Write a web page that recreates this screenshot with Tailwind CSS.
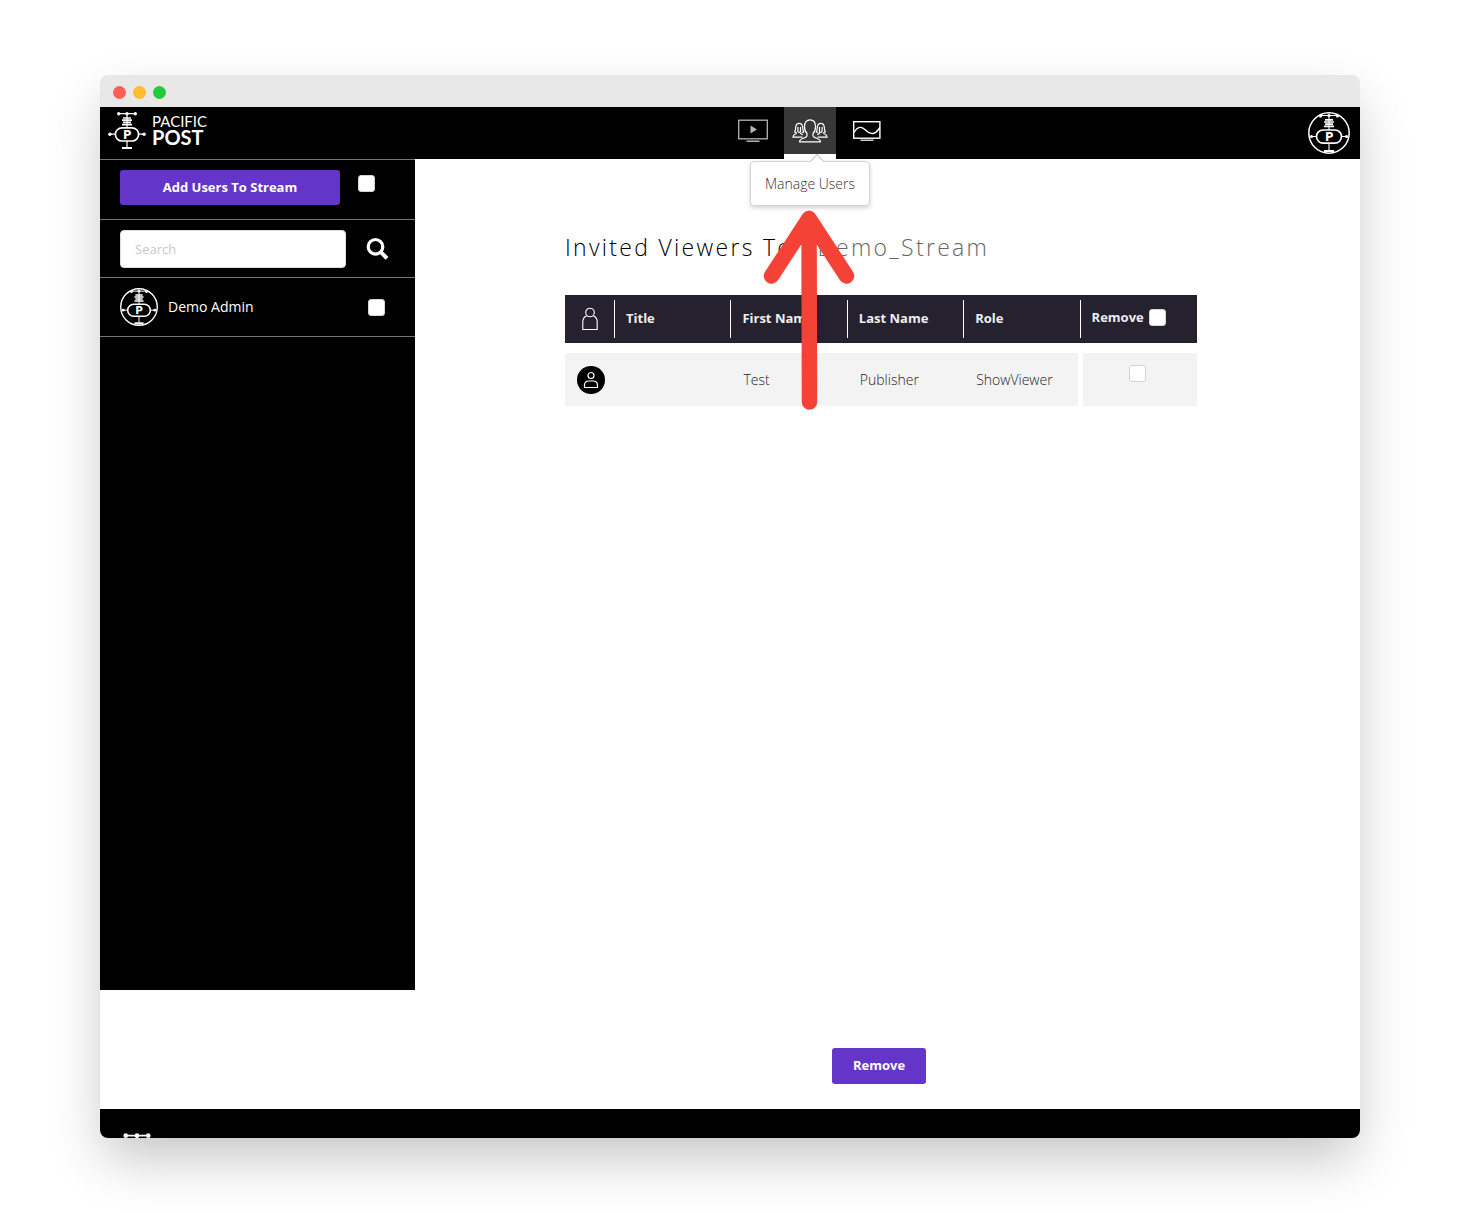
<!DOCTYPE html>
<html lang="en">
<head>
    <meta charset="UTF-8">
    <meta name="viewport" content="width=device-width, initial-scale=1.0">
    <title>Pacific Post - Manage Users</title>
    <script src="https://cdn.jsdelivr.net/npm/@tailwindcss/browser@4"></script>
</head>
<body class="bg-white font-['Open_Sans',sans-serif] text-sm overflow-hidden">

    <!-- shared shapes -->
    <svg class="hidden">
        <symbol id="emblem" viewBox="0 0 38 39">
            <g fill="none" stroke="#fff">
                <path d="M10.5 2.7h17M19 2.7v14.5M1.5 23.2h6M30.5 23.2h6M19 29.8v7" stroke-width="1.2"/>
                <path d="M15 7h8M14 9.200h10M15 11.400h8M14 13.600h10" stroke-width="1.700"/>
                <rect x="7.4" y="16.800" width="23.200" height="13.200" rx="6.6" stroke-width="1.700"/>
                <path d="M14 37h10" stroke-width="2.2"/>
            </g>
            <g fill="#fff">
                <circle cx="10.7" cy="2.7" r="1.7"/><circle cx="19" cy="2.7" r="1.7"/><circle cx="27.3" cy="2.7" r="1.7"/>
                <circle cx="1.9" cy="23.2" r="1.7"/><circle cx="36.1" cy="23.2" r="1.7"/>
                <text x="19.2" y="27.500" text-anchor="middle" font-family="DejaVu Sans" font-weight="bold" font-size="11.500">P</text>
            </g>
        </symbol>
        <symbol id="badge" viewBox="0 0 42 42">
            <circle cx="21" cy="21" r="20.2" fill="#000" stroke="#fff" stroke-width="1.5"/>
            <g fill="none" stroke="#fff">
                <path d="M12 3.5h18M21 2v16M2 24.5h7M33 24.5h7M21 31v9" stroke-width="1.1"/>
                <path d="M17 7.800h8M16 10h10M17 12.200h8M16 14.400h10" stroke-width="1.700"/>
                <rect x="8.5" y="18" width="25" height="13.200" rx="6.6" stroke-width="1.700"/>
                <path d="M16 39h10" stroke-width="2.2"/>
            </g>
            <g fill="#fff">
                <circle cx="12.6" cy="4" r="1.6"/><circle cx="21" cy="3.5" r="1.6"/><circle cx="29.4" cy="4" r="1.6"/>
                <circle cx="3.5" cy="24.5" r="1.6"/><circle cx="38.5" cy="24.5" r="1.6"/>
                <text x="21.2" y="28.800" text-anchor="middle" font-family="DejaVu Sans" font-weight="bold" font-size="11.500">P</text>
            </g>
        </symbol>
    </svg>

    <div class="h-screen px-[100px] py-[75px]">
        <div class="h-full flex flex-col rounded-lg overflow-hidden bg-white shadow-[0_24px_54px_-4px_rgba(0,0,0,0.23)]">

            <div class="h-8 shrink-0 bg-[#e8e8e8] flex items-center gap-[7px] px-[13px] pt-0.5">
                <span class="size-[13px] rounded-full bg-[#ff5f56]"></span>
                <span class="size-[13px] rounded-full bg-[#ffbd2e]"></span>
                <span class="size-[13px] rounded-full bg-[#27c93f]"></span>
            </div>

            <header class="h-[52px] shrink-0 bg-black flex relative z-10">
                <a href="#" class="w-[212px] flex pl-2 pt-1 gap-1.5 text-white font-['Lato',sans-serif]">
                    <svg class="w-[38px] h-[39px]"><use href="#emblem"/></svg>
                    <span class="flex flex-col pt-0.5">
                        <span class="text-[15px] leading-4 font-normal">PACIFIC</span>
                        <span class="text-[20px] leading-4 font-bold">POST</span>
                    </span>
                </a>
                <nav class="flex-1 flex justify-center gap-[5px]">
                    <a href="#" aria-label="Streams" class="w-[52px] h-[47px] flex items-center justify-center">
                        <svg class="w-[30px] h-6" viewBox="0 0 30 24" fill="none" stroke="#b4b4b4">
                            <rect x=".7" y="1.2" width="28.6" height="18.6" stroke-width="1.3"/>
                            <path d="M8.5 22.3h13" stroke-width="1.4"/>
                            <path d="M12.5 6.5v8l6.5-4z" fill="#b4b4b4" stroke="none"/>
                        </svg>
                    </a>
                    <div class="relative w-[52px]">
                        <a href="#" aria-label="Manage Users" class="h-[52px] flex items-center justify-center bg-[#383838] border-b-5 border-white">
                            <svg class="w-9 h-6" viewBox="0 0 36 24" fill="none" stroke="#fff" stroke-width="1.2" stroke-linejoin="round" stroke-linecap="round">
                                <path d="M15 14.500c-1.700-1.500-2.500-3.800-2.500-7C12.500 3.400 14.700.8 18 .8s5.500 2.600 5.500 6.700c0 3.200-.8 5.500-2.500 7v2.300c0 1.200 1 1.500 3 2.200 3 1 4.500 1.800 4.500 3.800H7.500c0-2 1.500-2.800 4.500-3.800 2-.7 3-1 3-2.200z"/>
                                <path d="M10 18.200H.9c.1-2 1.100-2.700 2.600-3.200.9-.3 1-.8.6-1.500L2.600 13c1.200-1.500.9-3.300 1.100-5C4 5.600 5.200 4.300 7.200 4.300S10.400 5.600 10.700 8c.2 1.700-.1 3.500 1.100 5l-1.500.5M5.900 8.300v4c0 1.500 2.600 1.500 2.600 0v-4M8.500 14c.2.700.8 1 1.800 1.500"/>
                                <path d="M26 18.200h9.100c-.1-2-1.100-2.700-2.600-3.200-.9-.3-1-.8-.6-1.500l1.500-.5c-1.200-1.500-.9-3.300-1.100-5-.3-2.400-1.500-3.700-3.500-3.700S25.600 5.600 25.300 8c-.2 1.700.1 3.500-1.100 5l1.500.5M30.100 8.300v4c0 1.500-2.600 1.500-2.600 0v-4M27.500 14c-.2.700-.8 1-1.800 1.500"/>
                            </svg>
                        </a>
                        <div role="tooltip" class="absolute -left-[34px] top-[54px] w-[120px] h-[45px] flex items-center justify-center bg-white border border-[#d4d4d5] rounded font-light text-[#333] shadow-[0_2px_4px_rgba(34,36,38,0.2)]">
                            Manage Users
                            <span class="absolute left-[61px] -top-[6px] size-2.5 rotate-45 bg-white border-t border-l border-[#c4c4c5]"></span>
                        </div>
                        <!-- pointer to the active tab -->
                        <svg class="absolute -left-[22px] top-[101px] w-[94px] h-[203px]" viewBox="0 0 94 203" fill="none" stroke="#f44336" stroke-width="15.5" stroke-linecap="round" stroke-linejoin="round">
                            <path d="M47 10.500L47.500 194M9.500 68L47 10.500 84.500 68"/>
                        </svg>
                    </div>
                    <a href="#" aria-label="Analytics" class="w-[52px] h-[47px] flex items-center justify-center">
                        <svg class="w-7 h-5" viewBox="0 0 28 20" fill="none" stroke="#fff">
                            <rect x=".7" y=".7" width="26.200" height="16.500" stroke-width="1.4"/>
                            <path d="M1 11.500C5 5 8.500 5 13 9.500s9 4.500 14-3" stroke-width="1.4"/>
                            <path d="M7.500 19.200h13" stroke="#ccc" stroke-width="1.6"/>
                        </svg>
                    </a>
                </nav>
                <a href="#" aria-label="Account" class="w-[52px] pt-[5px]">
                    <svg class="size-[42px]"><use href="#badge"/></svg>
                </a>
            </header>

            <div class="flex-1 min-h-0 flex">
                <aside class="w-[315px] shrink-0 mb-[119px] bg-black border-t border-[#777] text-white">
                    <div class="h-[60px] flex items-start pt-2.5 pl-5 pr-10 justify-between border-b border-[#777]">
                        <button type="button" class="w-[220px] h-[35px] pb-px rounded-[3px] bg-[#6435c9] text-[13px] font-bold">Add Users To Stream</button>
                        <input type="checkbox" aria-label="Select all users" class="appearance-none size-[17px] mt-[5px] rounded-[3px] bg-white border border-[#d4d4d5]">
                    </div>
                    <div class="h-[58px] flex items-center pl-5 pr-[26px] justify-between border-b border-[#777]">
                        <input type="text" placeholder="Search" aria-label="Search" class="w-[226px] h-[38px] px-3.5 rounded bg-white border border-[#dedede] text-[13px] text-black placeholder:text-[#c7c7c7] outline-none">
                        <button type="button" aria-label="Search users">
                            <svg class="size-[23px]" viewBox="0 0 23 23" fill="none" stroke="#fff">
                                <circle cx="9.500" cy="9.800" r="7.300" stroke-width="3.200"/>
                                <path d="M15 15.300l6 6" stroke-width="4"/>
                            </svg>
                        </button>
                    </div>
                    <div class="h-[59px] flex items-center pl-5 pr-[30px] border-b border-[#777]">
                        <svg class="size-[38px]"><use href="#badge"/></svg>
                        <label for="demoAdmin" class="flex-1 pl-2.5">Demo Admin</label>
                        <input type="checkbox" id="demoAdmin" class="appearance-none size-[17px] rounded-[3px] bg-white border border-[#d4d4d5]">
                    </div>
                </aside>

                <main class="flex-1 flex flex-col pl-[150px] pr-8 pt-[72px] pb-[25px]">
                    <h1 class="text-[23px] leading-8 font-light tracking-widest text-black">Invited Viewers To : <span class="text-[#666]">Demo_Stream</span></h1>

                    <table class="mt-8 w-full max-w-[632px] table-fixed border-separate border-spacing-0 text-left">
                        <thead class="text-[13px] text-[#eee]">
                            <tr class="h-12 bg-[#25212f]">
                                <th class="w-[50px] p-0">
                                    <div class="h-[38px] border-r border-white flex items-center justify-center">
                                        <svg class="w-4 h-6" viewBox="0 0 16 24" fill="none" stroke="#fff" stroke-width="1.1">
                                            <circle cx="8" cy="5.500" r="4.300"/>
                                            <path d="M4.700 8.800C2.200 9.800.8 12 .8 15v7.500h14.400V15c0-3-1.400-5.200-3.900-6.200"/>
                                        </svg>
                                    </div>
                                </th>
                                <th class="p-0"><div class="h-[38px] border-r border-white flex items-center pl-[11px] pb-0.5">Title</div></th>
                                <th class="p-0"><div class="h-[38px] border-r border-white flex items-center pl-[11px] pb-0.5">First Name</div></th>
                                <th class="p-0"><div class="h-[38px] border-r border-white flex items-center pl-[11px] pb-0.5">Last Name</div></th>
                                <th class="p-0"><div class="h-[38px] border-r border-white flex items-center pl-[11px] pb-0.5">Role</div></th>
                                <th class="p-0">
                                    <div class="h-[38px] flex items-center gap-[5px] pl-[11px] pb-1">
                                        <label for="removeAll">Remove</label>
                                        <input type="checkbox" id="removeAll" class="appearance-none size-[17px] rounded-[3px] bg-white border border-[#d4d4d5]">
                                    </div>
                                </th>
                            </tr>
                        </thead>
                        <tbody class="font-light text-[#25212f]">
                            <tr class="h-[63px]">
                                <td class="p-0 border-t-10 border-white bg-[#f3f3f3]">
                                    <svg class="size-7 ml-3" viewBox="0 0 28 28" fill="none" stroke="#fff" stroke-width="1.2">
                                        <circle cx="14" cy="14" r="14" fill="#000" stroke="none"/>
                                        <circle cx="14" cy="9.500" r="3"/>
                                        <path d="M7.500 21.500v-2.300c0-2.600 2-4.200 4.500-4.200h4c2.500 0 4.500 1.600 4.500 4.200v2.300z"/>
                                    </svg>
                                </td>
                                <td class="p-0 pl-3 border-t-10 border-white bg-[#f3f3f3]"></td>
                                <td class="p-0 pl-3 border-t-10 border-white bg-[#f3f3f3]">Test</td>
                                <td class="p-0 pl-3 border-t-10 border-white bg-[#f3f3f3]">Publisher</td>
                                <td class="p-0 pl-3 border-t-10 border-r-3 border-white bg-[#f3f3f3]">ShowViewer</td>
                                <td class="p-0 border-t-10 border-l-2 border-white bg-[#f3f3f3] align-top">
                                    <input type="checkbox" aria-label="Remove Test Publisher" class="appearance-none block size-[17px] mt-3 ml-[46px] rounded-[3px] bg-white border border-[#d4d4d5]">
                                </td>
                            </tr>
                        </tbody>
                    </table>

                    <div class="mt-auto max-w-[632px] flex justify-center pr-1">
                        <button type="button" class="w-[94px] h-9 pb-0.5 rounded-[3px] bg-[#6435c9] text-white text-[13px] font-bold">Remove</button>
                    </div>
                </main>
            </div>

            <footer class="h-[29px] shrink-0 bg-black pl-[11px] pt-[23px] overflow-hidden">
                <svg class="w-[52px] h-[53px]"><use href="#emblem"/></svg>
            </footer>
        </div>
    </div>

</body>
</html>
